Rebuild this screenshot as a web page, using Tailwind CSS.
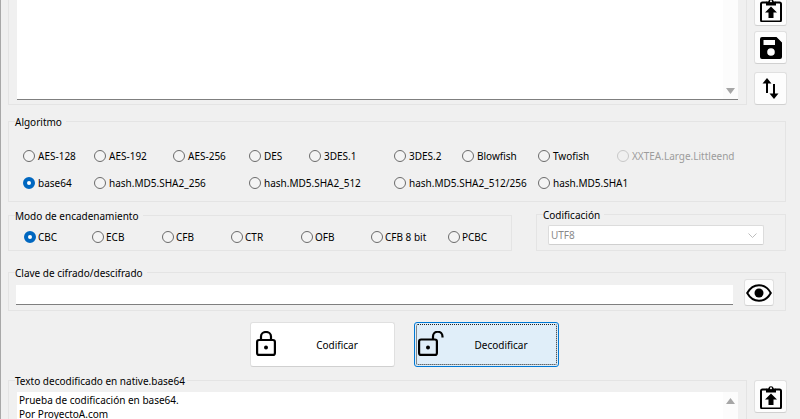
<!DOCTYPE html>
<html>
<head>
<meta charset="utf-8">
<script src="https://cdn.jsdelivr.net/npm/@tailwindcss/browser@4"></script>
</head>
<body class="m-0 bg-[#f0f0f0]">
<div class="w-[800px] h-[419px] overflow-hidden bg-[#f0f0f0] text-[10px] leading-[16px] text-black font-['Noto_Sans','Roboto',sans-serif] flex flex-col border-l border-[#a8a8a8] pl-[7px] pr-[14px]">

  <!-- top text section -->
  <div class="flex h-[105px] shrink-0">
    <div class="w-[739px] h-[105px] border border-t-0 border-[#e4e4e4] pl-[8px] pr-[8px] shrink-0">
      <div class="h-[100px] bg-white border-b border-[#7f7f7f] flex justify-end items-end">
        <div class="w-[15px] h-[99px] bg-[#fcfcfc] flex justify-center items-end pb-[5px]">
          <svg width="9" height="6" viewBox="0 0 9 6"><path d="M0 0H9L4.500 6Z" fill="#a6a6a6"/></svg>
        </div>
      </div>
    </div>
    <div class="ml-[7px] w-[33px] flex flex-col -mt-[7px]">
      <button class="w-[33px] h-[33px] bg-[#fdfdfd] rounded-[3px] border border-[#e0e0e0] border-b-[#d0d0d0] flex items-center justify-center shrink-0">
        <svg width="22" height="24" viewBox="0 0 22 24" fill="none"><path d="M6.500 4.500H2.500A1.500 1.500 0 0 0 1 6V22A1.500 1.500 0 0 0 2.500 23.500H19.500A1.500 1.500 0 0 0 21 22V6A1.500 1.500 0 0 0 19.500 4.500H15.500" stroke="#000" stroke-width="2"/><path d="M6 7.500V3.500H8.200A2.900 2.900 0 0 1 13.800 3.500H16V7.500Z" fill="#000"/><circle cx="11" cy="3.300" r="1" fill="#fff"/><path d="M11 8.500L17 14.500H13.500V20H8.500V14.500H5Z" fill="#000"/></svg>
      </button>
      <button class="mt-[5px] w-[33px] h-[33px] bg-[#fdfdfd] rounded-[3px] border border-[#e0e0e0] border-b-[#d0d0d0] flex items-center justify-center shrink-0">
        <svg width="22" height="22" viewBox="0 0 22 22"><path fill-rule="evenodd" d="M2 0H16.500L22 5.500V20A2 2 0 0 1 20 22H2A2 2 0 0 1 0 20V2A2 2 0 0 1 2 0ZM3.500 3V8H15V3ZM11 11.200A3.800 3.800 0 1 0 11 18.800A3.800 3.800 0 1 0 11 11.200Z" fill="#000"/></svg>
      </button>
      <button class="mt-[8px] w-[33px] h-[33px] bg-[#fdfdfd] rounded-[3px] border border-[#e0e0e0] border-b-[#d0d0d0] flex items-center justify-center shrink-0">
        <svg width="17" height="21" viewBox="0 0 17 21" fill="none"><path d="M5 4V15M12 6V17" stroke="#000" stroke-width="2"/><path d="M0.500 5.500L5 0L9.500 5.500Z" fill="#000"/><path d="M7.500 15.500H16.500L12 21Z" fill="#000"/></svg>
      </button>
    </div>
  </div>

  <!-- Algoritmo -->
  <div class="relative mt-[16px] h-[81px] w-[778px] border border-[#e4e4e4] pl-[14px] shrink-0">
    <span class="absolute -top-[7px] left-[6px] bg-[#f0f0f0] pr-[4px] leading-[14px]">Algoritmo</span>
    <div class="grid grid-cols-[71px_79px_76px_60px_85px_68px_76px_79px_1fr] grid-rows-[27px_27px] mt-[20px] items-center">
      <label class="flex items-center gap-[3px]"><span class="w-[12px] h-[12px] rounded-full border border-[#6b6b6b] bg-[#f4f4f4]"></span>AES-128</label>
      <label class="flex items-center gap-[3px]"><span class="w-[12px] h-[12px] rounded-full border border-[#6b6b6b] bg-[#f4f4f4]"></span>AES-192</label>
      <label class="flex items-center gap-[3px]"><span class="w-[12px] h-[12px] rounded-full border border-[#6b6b6b] bg-[#f4f4f4]"></span>AES-256</label>
      <label class="flex items-center gap-[3px]"><span class="w-[12px] h-[12px] rounded-full border border-[#6b6b6b] bg-[#f4f4f4]"></span>DES</label>
      <label class="flex items-center gap-[3px]"><span class="w-[12px] h-[12px] rounded-full border border-[#6b6b6b] bg-[#f4f4f4]"></span>3DES.1</label>
      <label class="flex items-center gap-[3px]"><span class="w-[12px] h-[12px] rounded-full border border-[#6b6b6b] bg-[#f4f4f4]"></span>3DES.2</label>
      <label class="flex items-center gap-[3px]"><span class="w-[12px] h-[12px] rounded-full border border-[#6b6b6b] bg-[#f4f4f4]"></span>Blowfish</label>
      <label class="flex items-center gap-[3px]"><span class="w-[12px] h-[12px] rounded-full border border-[#6b6b6b] bg-[#f4f4f4]"></span>Twofish</label>
      <label class="flex items-center gap-[3px] text-[#9c9c9c] whitespace-nowrap"><span class="w-[12px] h-[12px] rounded-full border border-[#c8c8c8] bg-[#f0f0f0]"></span>XXTEA.Large.Littleend</label>
      <label class="flex items-center gap-[3px]"><span class="w-[12px] h-[12px] rounded-full border-[4px] border-[#0067c0] bg-white"></span>base64</label>
      <label class="flex items-center gap-[3px] col-span-2 whitespace-nowrap"><span class="w-[12px] h-[12px] rounded-full border border-[#6b6b6b] bg-[#f4f4f4]"></span>hash.MD5.SHA2_256</label>
      <label class="flex items-center gap-[3px] col-span-2 whitespace-nowrap"><span class="w-[12px] h-[12px] rounded-full border border-[#6b6b6b] bg-[#f4f4f4]"></span>hash.MD5.SHA2_512</label>
      <label class="flex items-center gap-[3px] col-span-2 whitespace-nowrap"><span class="w-[12px] h-[12px] rounded-full border border-[#6b6b6b] bg-[#f4f4f4]"></span>hash.MD5.SHA2_512/256</label>
      <label class="flex items-center gap-[3px] col-span-2 whitespace-nowrap"><span class="w-[12px] h-[12px] rounded-full border border-[#6b6b6b] bg-[#f4f4f4]"></span>hash.MD5.SHA1</label>
    </div>
  </div>

  <!-- Modo + Codificacion -->
  <div class="flex mt-[12px] h-[37px] shrink-0 items-end">
    <div class="relative w-[504px] h-[36px] border border-[#e4e4e4] pl-[15px]">
      <span class="absolute -top-[7px] left-[6px] bg-[#f0f0f0] pr-[4px] leading-[14px]">Modo de encadenamiento</span>
      <div class="grid grid-cols-[68px_70px_69px_70px_70px_77px_auto] h-full items-center pt-[8px]">
        <label class="flex items-center gap-[2px]"><span class="w-[12px] h-[12px] rounded-full border-[4px] border-[#0067c0] bg-white"></span>CBC</label>
        <label class="flex items-center gap-[2px]"><span class="w-[12px] h-[12px] rounded-full border border-[#6b6b6b] bg-[#f4f4f4]"></span>ECB</label>
        <label class="flex items-center gap-[2px]"><span class="w-[12px] h-[12px] rounded-full border border-[#6b6b6b] bg-[#f4f4f4]"></span>CFB</label>
        <label class="flex items-center gap-[2px]"><span class="w-[12px] h-[12px] rounded-full border border-[#6b6b6b] bg-[#f4f4f4]"></span>CTR</label>
        <label class="flex items-center gap-[2px]"><span class="w-[12px] h-[12px] rounded-full border border-[#6b6b6b] bg-[#f4f4f4]"></span>OFB</label>
        <label class="flex items-center gap-[2px] whitespace-nowrap"><span class="w-[12px] h-[12px] rounded-full border border-[#6b6b6b] bg-[#f4f4f4]"></span>CFB 8 bit</label>
        <label class="flex items-center gap-[2px]"><span class="w-[12px] h-[12px] rounded-full border border-[#6b6b6b] bg-[#f4f4f4]"></span>PCBC</label>
      </div>
    </div>
    <div class="relative ml-[24px] w-[250px] h-[37px] border border-[#e4e4e4] pl-[11px]">
      <span class="absolute -top-[7px] left-[6px] bg-[#f0f0f0] pr-[4px] leading-[14px]">Codificación</span>
      <div class="mt-[10px] w-[216px] h-[20px] bg-white border border-[#dcdcdc] border-b-[#cfcfcf] rounded-[2px] flex items-center justify-between pl-[2px] pr-[6px] text-[#8a8a8a]">
        <span>UTF8</span>
        <svg width="9" height="5" viewBox="0 0 9 5" fill="none"><path d="M0.500 0.500L4.500 4.500L8.500 0.500" stroke="#bdbdbd"/></svg>
      </div>
    </div>
  </div>

  <!-- Clave -->
  <div class="relative mt-[21px] w-[778px] h-[39px] border border-[#e4e4e4] pl-[7px] flex items-start shrink-0">
    <span class="absolute -top-[7px] left-[6px] bg-[#f0f0f0] pr-[4px] leading-[14px]">Clave de cifrado/descifrado</span>
    <div class="mt-[12px] w-[717px] h-[20px] bg-white border-b border-[#7f7f7f] shrink-0"></div>
    <button class="ml-[11px] mt-[6px] w-[30px] h-[27px] bg-[#fdfdfd] rounded-[3px] border border-[#e0e0e0] border-b-[#d0d0d0] flex items-center justify-center shrink-0">
      <svg width="26" height="18" viewBox="0 0 26 18" fill="none"><path d="M1.200 9C4 4 8.300 1.200 13 1.200S22 4 24.800 9C22 14 17.700 16.800 13 16.800S4 14 1.200 9Z" stroke="#000" stroke-width="2"/><circle cx="13" cy="9" r="4.500" fill="#000"/></svg>
    </button>
  </div>

  <!-- Buttons -->
  <div class="flex mt-[11px] ml-[242px] gap-[19px] shrink-0">
    <button class="relative w-[145px] h-[45px] bg-white rounded-[3px] border border-[#e0e0e0] border-b-[#d0d0d0] flex items-center justify-center pl-[29px]">
      <svg class="absolute left-[5px] top-[8px]" width="20" height="25" viewBox="0 0 20 25" fill="none"><rect x="1.100" y="9" width="17.800" height="14.900" rx="2" stroke="#000" stroke-width="2.200"/><path d="M5 9V5.500A5 4.500 0 0 1 15 5.500V9" stroke="#000" stroke-width="2.200"/><circle cx="10" cy="16.500" r="2" fill="#000"/></svg>
      Codificar
    </button>
    <button class="relative w-[145px] h-[45px] bg-[#e0eef9] rounded-[3px] border border-[#0078d4] flex items-center justify-center pl-[29px]">
      <span class="absolute inset-[1px] border border-dotted border-[#222] rounded-[2px]"></span>
      <svg class="absolute left-[3px] top-[8px]" width="26" height="25" viewBox="0 0 26 25" fill="none"><rect x="1.100" y="8.500" width="17.800" height="15.400" rx="2" stroke="#000" stroke-width="2.200"/><path d="M15 8.500V5.500A4.500 4.500 0 0 1 24.500 5.500V6.500" stroke="#000" stroke-width="2.200"/><circle cx="10" cy="16.500" r="2" fill="#000"/></svg>
      <span class="relative">Decodificar</span>
    </button>
  </div>

  <!-- Bottom section -->
  <div class="flex mt-[13px] shrink-0">
    <div class="relative w-[739px] h-[60px] border border-[#e4e4e4] pl-[8px] pr-[8px] pt-[11px] shrink-0">
      <span class="absolute -top-[7px] left-[6px] bg-[#f0f0f0] pr-[2px] leading-[14px]">Texto decodificado en native.base64</span>
      <div class="h-[60px] bg-white flex justify-between pl-[2px]">
        <div class="leading-[13.500px] pt-[2px]"><div>Prueba de codificación en base64.</div><div>Por ProyectoA.com</div></div>
        <div class="w-[15px] h-full bg-[#fcfcfc] flex justify-center pt-[6px]">
          <svg width="9" height="6" viewBox="0 0 9 6"><path d="M0 6H9L4.500 0Z" fill="#a6a6a6"/></svg>
        </div>
      </div>
    </div>
    <button class="ml-[7px] w-[33px] h-[33px] bg-[#fdfdfd] rounded-[3px] border border-[#e0e0e0] border-b-[#d0d0d0] flex items-center justify-center shrink-0">
      <svg width="22" height="24" viewBox="0 0 22 24" fill="none"><path d="M6.500 4.500H2.500A1.500 1.500 0 0 0 1 6V22A1.500 1.500 0 0 0 2.500 23.500H19.500A1.500 1.500 0 0 0 21 22V6A1.500 1.500 0 0 0 19.500 4.500H15.500" stroke="#000" stroke-width="2"/><path d="M6 7.500V3.500H8.200A2.900 2.900 0 0 1 13.800 3.500H16V7.500Z" fill="#000"/><circle cx="11" cy="3.300" r="1" fill="#fff"/><path d="M11 8.500L17 14.500H13.500V20H8.500V14.500H5Z" fill="#000"/></svg>
    </button>
  </div>
</div>
</body>
</html>
